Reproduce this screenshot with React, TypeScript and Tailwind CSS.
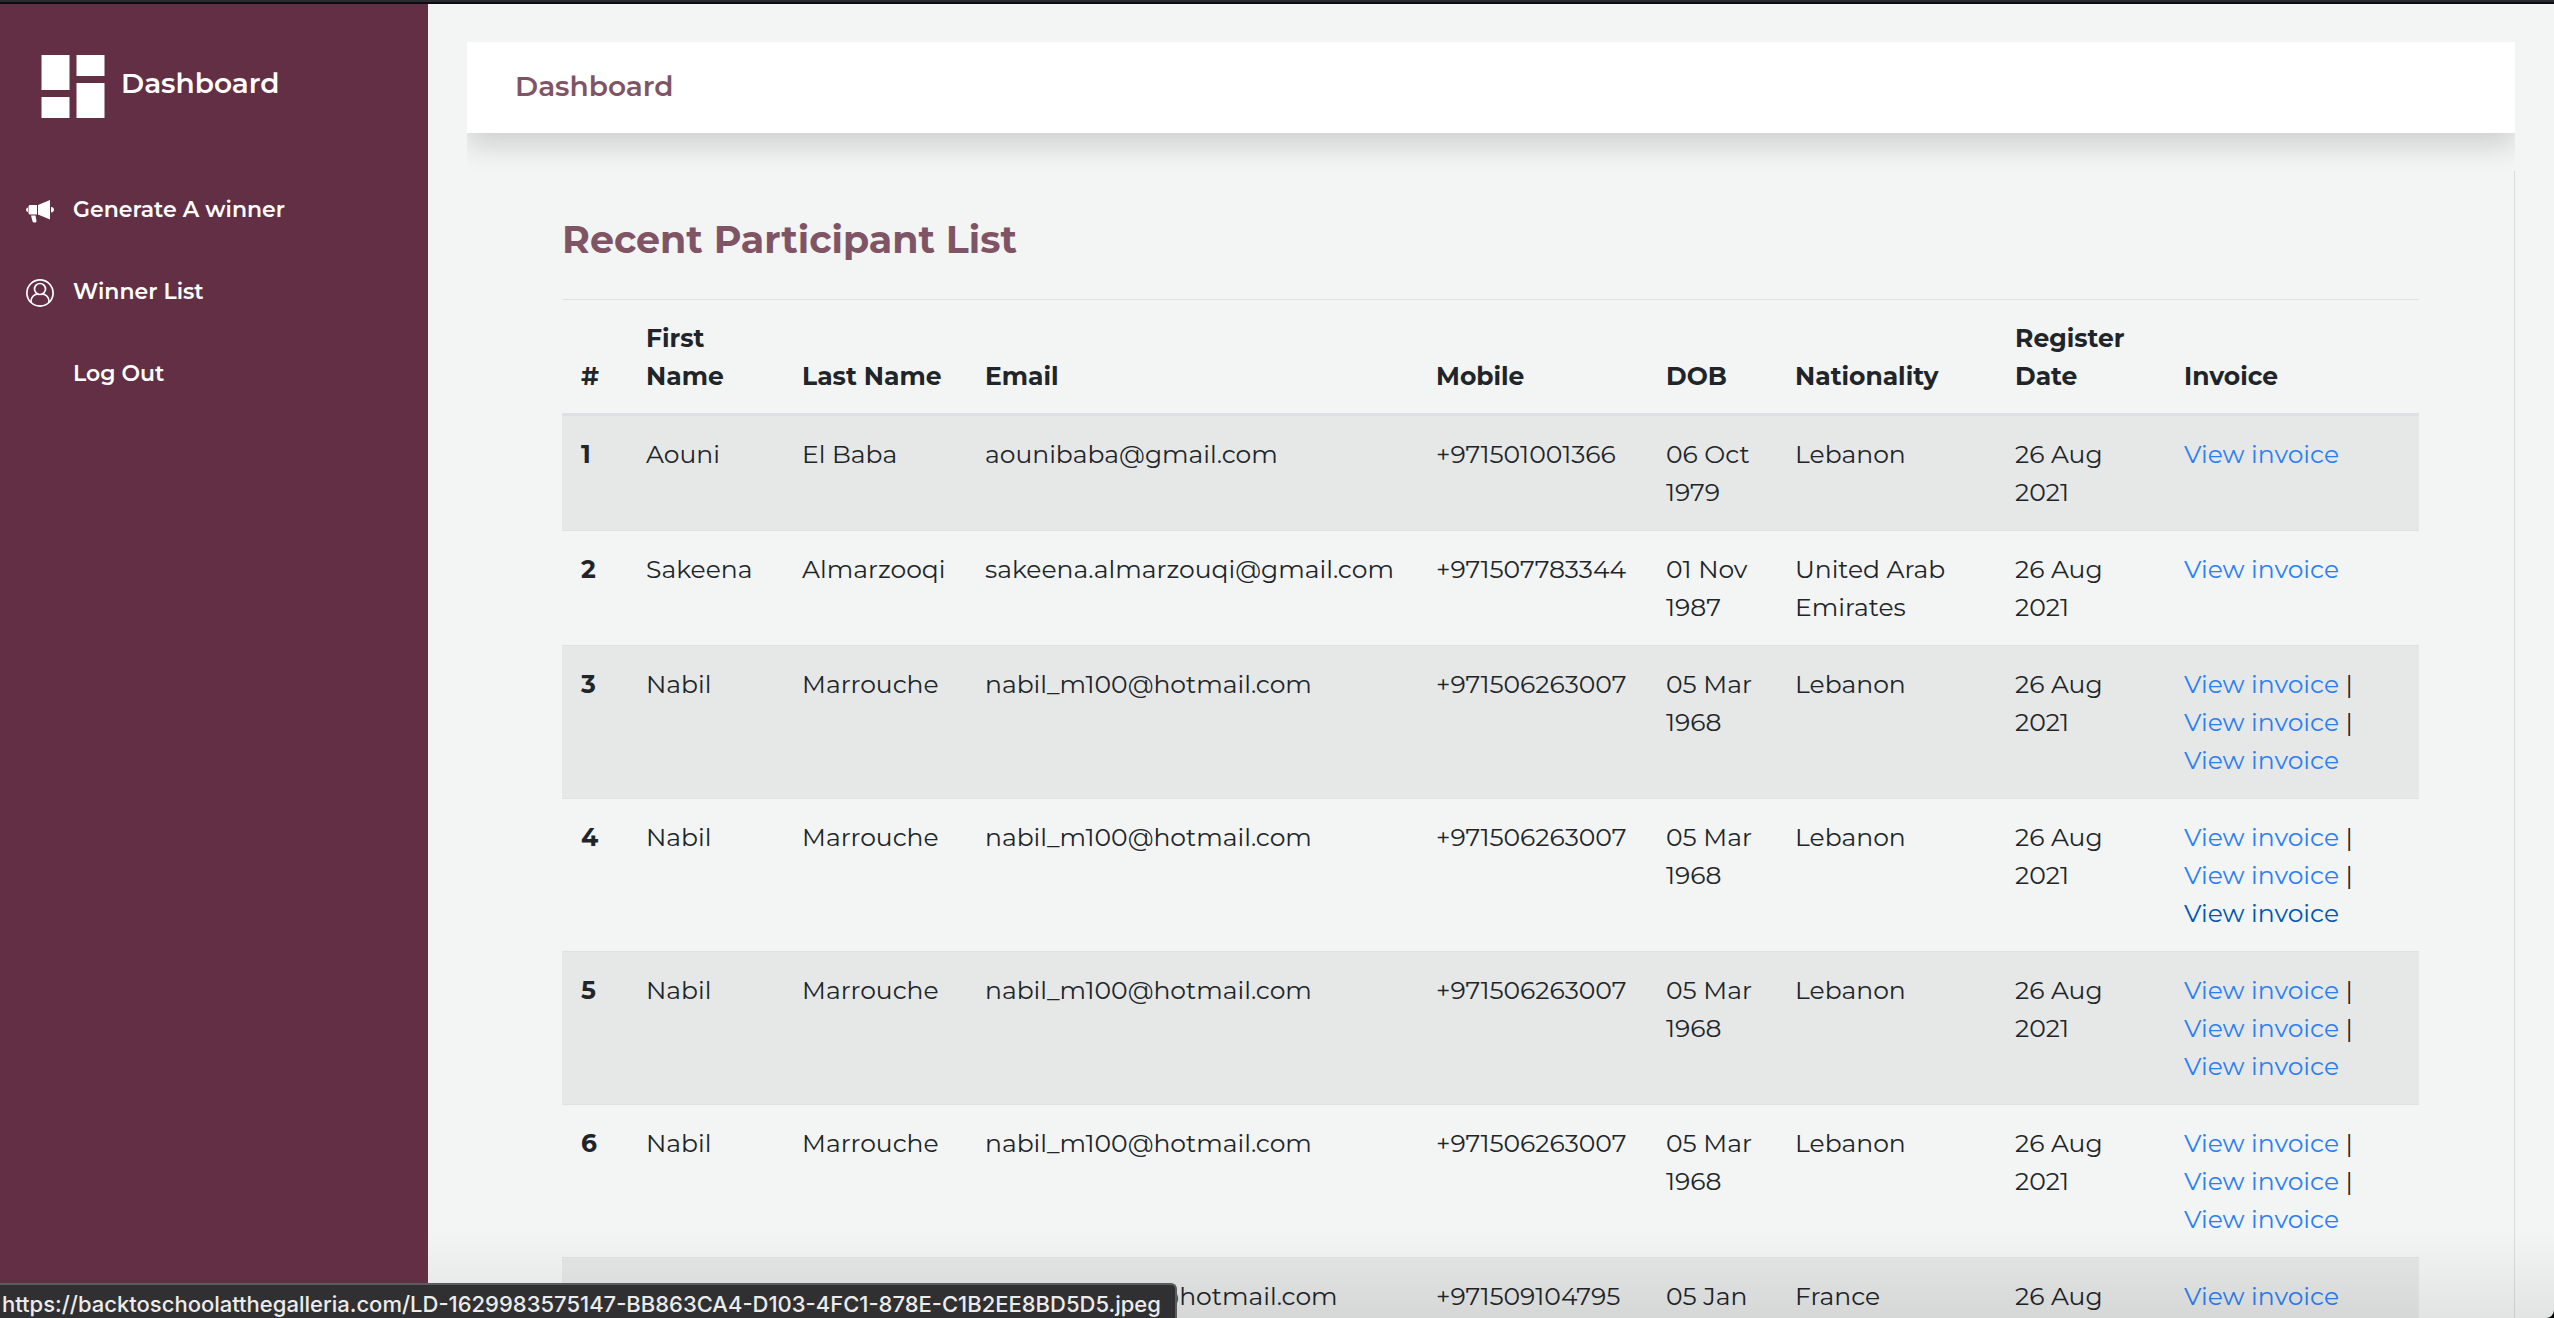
import type { ReactNode } from 'react'

type Participant = {
  id: number
  firstName?: string
  lastName?: string
  email: string
  mobile: string
  dob: string
  nationality: string
  registered: string
  invoices: number
  activeInvoice?: number
}

const participants: Participant[] = [
  { id: 1, firstName: 'Aouni', lastName: 'El Baba', email: 'aounibaba@gmail.com', mobile: '+971501001366', dob: '06 Oct 1979', nationality: 'Lebanon', registered: '26 Aug 2021', invoices: 1 },
  { id: 2, firstName: 'Sakeena', lastName: 'Almarzooqi', email: 'sakeena.almarzouqi@gmail.com', mobile: '+971507783344', dob: '01 Nov 1987', nationality: 'United Arab Emirates', registered: '26 Aug 2021', invoices: 1 },
  { id: 3, firstName: 'Nabil', lastName: 'Marrouche', email: 'nabil_m100@hotmail.com', mobile: '+971506263007', dob: '05 Mar 1968', nationality: 'Lebanon', registered: '26 Aug 2021', invoices: 3 },
  { id: 4, firstName: 'Nabil', lastName: 'Marrouche', email: 'nabil_m100@hotmail.com', mobile: '+971506263007', dob: '05 Mar 1968', nationality: 'Lebanon', registered: '26 Aug 2021', invoices: 3, activeInvoice: 2 },
  { id: 5, firstName: 'Nabil', lastName: 'Marrouche', email: 'nabil_m100@hotmail.com', mobile: '+971506263007', dob: '05 Mar 1968', nationality: 'Lebanon', registered: '26 Aug 2021', invoices: 3 },
  { id: 6, firstName: 'Nabil', lastName: 'Marrouche', email: 'nabil_m100@hotmail.com', mobile: '+971506263007', dob: '05 Mar 1968', nationality: 'Lebanon', registered: '26 Aug 2021', invoices: 3 },
  { id: 7, email: 'marie.laurent@hotmail.com', mobile: '+971509104795', dob: '05 Jan', nationality: 'France', registered: '26 Aug', invoices: 1 },
]

const columns = [
  { label: '#', width: 'w-[65px]' },
  { label: 'First Name', width: 'w-[156px]' },
  { label: 'Last Name', width: 'w-[183px]' },
  { label: 'Email', width: 'w-[451px]' },
  { label: 'Mobile', width: 'w-[230px]' },
  { label: 'DOB', width: 'w-[129px]' },
  { label: 'Nationality', width: 'w-[220px]' },
  { label: 'Register Date', width: 'w-[169px]' },
  { label: 'Invoice', width: 'w-[254px]' },
]

function LogoIcon() {
  return (
    <svg className="size-16 shrink-0" viewBox="0 0 64 64" fill="currentColor" aria-hidden="true">
      <path d="M.5 0h28v35h-28zM.5 42h28v21h-28zM35.5 0h28v21h-28zM35.5 28h28v35h-28z" />
    </svg>
  )
}

function MegaphoneIcon() {
  return (
    <svg className="size-7" viewBox="0 0 28 28" fill="currentColor" aria-hidden="true">
      <path d="M4 8h7v9.500H4q-1.500 0-1.500-1.500V9.500Q2.500 8 4 8zM12 8l12-5v19.500l-12-5zM25 10q3 .3 3 2.700t-3 2.700zM2 10.500v4.500q-2-.3-2-2.200t2-2.300zM5 18.500h4.500l1 5.500q0 1.500-1.500 1.500H8q-1.200 0-1.500-1.200z" />
    </svg>
  )
}

function UserIcon() {
  return (
    <svg className="size-7" viewBox="0 0 28 28" fill="none" stroke="currentColor" strokeWidth="1.700" aria-hidden="true">
      <circle cx="14" cy="14" r="13.100" />
      <circle cx="14" cy="10" r="5.500" />
      <path d="M5 23.300v-1c0-4 3-7 6.500-7.500M23 23.300v-1c0-4-3-7-6.500-7.500" />
    </svg>
  )
}

function NavItem({ icon, label }: { icon?: ReactNode; label: string }) {
  return (
    <li>
      <a href="#" className="flex h-[82px] items-center gap-[19px] pl-[26px] text-[22px] font-semibold">
        <span className="w-7 shrink-0 pt-1">{icon}</span>
        {label}
      </a>
    </li>
  )
}

function Invoices({ count, active }: { count: number; active?: number }) {
  return (
    <>
      {Array.from({ length: count }, (_, i) => (
        <div key={i}>
          <a href="#" className={i === active ? 'text-[#0056b3]' : 'text-[#2a7ff5]'}>
            View invoice
          </a>
          {i < count - 1 && ' |'}
        </div>
      ))}
    </>
  )
}

export default function App() {
  return (
    <div className="bg-black">
      <div className="relative flex h-screen flex-col overflow-hidden rounded-br-lg bg-[#f3f5f4] font-['Montserrat','Inter',sans-serif] text-[#212529]">
        <div className="h-1 shrink-0 border-b-2 border-[#0c0c10] bg-[#2a2a33]" />

        <div className="flex min-h-0 flex-1">
          {/* Sidebar */}
          <aside className="w-[428px] shrink-0 bg-[#622f44] text-white">
            <a href="#" className="flex items-start gap-4 pt-[51px] pl-[41px] text-[28px] leading-[56px] font-semibold">
              <LogoIcon />
              Dashboard
            </a>
            <nav className="pt-[49px]">
              <ul>
                <NavItem icon={<MegaphoneIcon />} label="Generate A winner" />
                <NavItem icon={<UserIcon />} label="Winner List" />
                <NavItem label="Log Out" />
              </ul>
            </nav>
          </aside>

          {/* Content */}
          <main className="min-w-0 flex-1 pt-[38px] pr-[39px] pl-[39px]">
            <div className="overflow-hidden pb-[38px]">
              <header className="bg-white px-12 pt-[23px] pb-[25px] text-[28px] leading-[43px] font-semibold text-[#7f5566] shadow-[0_13px_26px_rgba(0,0,0,0.15)]">
                Dashboard
              </header>
            </div>

            <section className="border-r border-[#d8dbdb] pt-[45px] pr-[95px] pl-[95px]">
              <h1 className="pb-[35px] text-[38px] leading-[48px] font-bold text-[#7f5566]">Recent Participant List</h1>
              <table className="w-full table-fixed border-collapse text-left text-[25px] leading-[38px]">
                <colgroup>
                  {columns.map((col) => (
                    <col key={col.label} className={col.width} />
                  ))}
                </colgroup>
                <thead>
                  <tr className="border-t border-b-3 border-t-[#dee2e3] border-b-[#dfe0e6]">
                    {columns.map((col) => (
                      <th key={col.label} scope="col" className="px-[19px] pt-[19px] pb-[18px] align-bottom font-bold">
                        {col.label}
                      </th>
                    ))}
                  </tr>
                </thead>
                <tbody>
                  {participants.map((p) => (
                    <tr key={p.id} className="border-t border-[#dee2e3] align-top odd:bg-[#e6e8e7] *:px-[19px] *:py-[19px]">
                      <th scope="row" className="font-bold">{p.id}</th>
                      <td>{p.firstName}</td>
                      <td>{p.lastName}</td>
                      <td>{p.email}</td>
                      <td>{p.mobile}</td>
                      <td>{p.dob}</td>
                      <td>{p.nationality}</td>
                      <td>{p.registered}</td>
                      <td>
                        <Invoices count={p.invoices} active={p.activeInvoice} />
                      </td>
                    </tr>
                  ))}
                </tbody>
              </table>
            </section>
          </main>
        </div>

        {/* Link status bubble */}
        <div className="pointer-events-none absolute right-0 bottom-0 left-[428px] h-22 bg-linear-to-t from-black/7 to-transparent" />
        <div className="absolute bottom-0 left-0 h-[35px] rounded-tr-md border-t-2 border-r-2 border-[#5c5c5e] bg-[#303032] pr-[14px] pl-[2px] font-['Inter',sans-serif] text-[22px] leading-[38px] font-medium text-[#ececec]">
          https://backtoschoolatthegalleria.com/LD-1629983575147-BB863CA4-D103-4FC1-878E-C1B2EE8BD5D5.jpeg
        </div>
      </div>
    </div>
  )
}
